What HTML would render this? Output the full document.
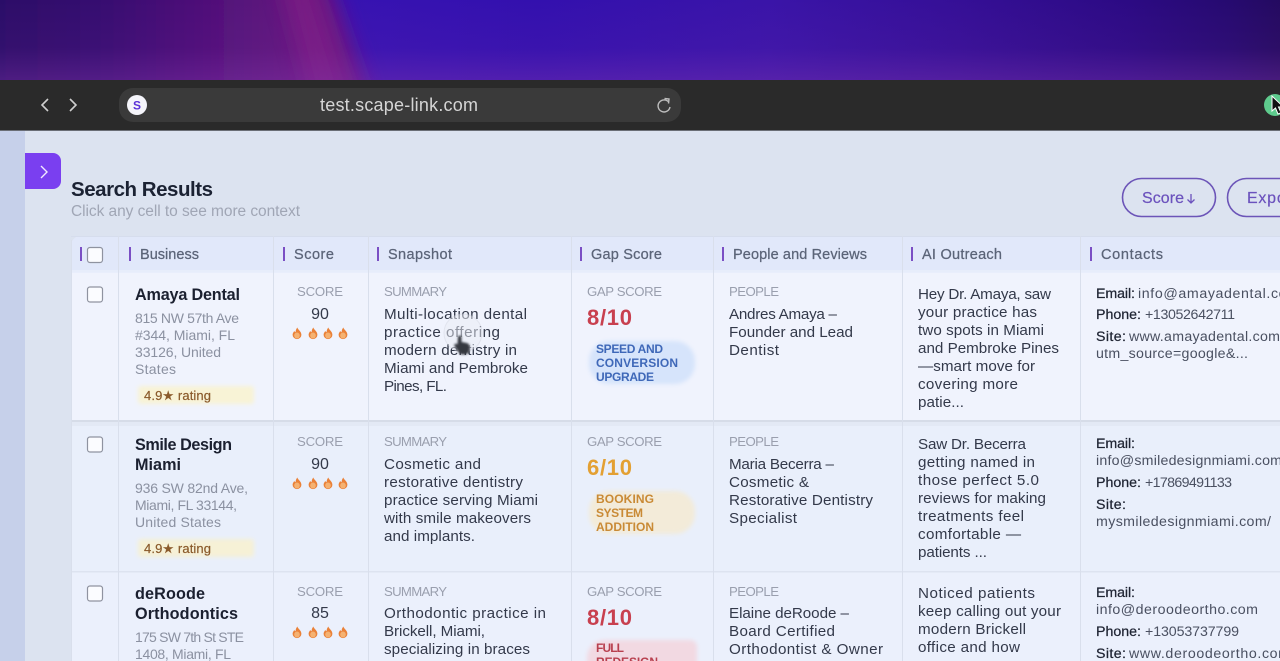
<!DOCTYPE html>
<html lang="en"><head><meta charset="utf-8"><title>Search Results</title>
<style>
html,body{margin:0;padding:0;width:1280px;height:661px;overflow:hidden;background:#dce3f0}
svg{display:block;filter:blur(.35px)}
text{font-family:"Liberation Sans",sans-serif}
.t{font-size:15.2px;fill:#33394a}
.h{font-size:14.5px;fill:#5b6478;stroke:#5b6478;stroke-width:.25px}
.l{font-size:13.2px;fill:#9a9fae}
.n{font-size:16.2px;fill:#1b2030;font-weight:700}
.a{font-size:14px;fill:#8b91a1}
.r{font-size:13px;fill:#8a5a2b;stroke:#8a5a2b;stroke-width:.2px}
.s{font-size:16px;fill:#33394a}
.g{font-size:22px;font-weight:700}
.p{font-size:12px;font-weight:700}
.c{font-size:14.2px;fill:#4a5061}
.b{font-size:14.2px;fill:#1f2433;stroke:#1f2433;stroke-width:.25px}
.bar{fill:#7a4fc4}
.cb{fill:#fbfcff;stroke:#8f93a0;stroke-width:1.2}
</style></head><body>
<svg xmlns="http://www.w3.org/2000/svg" width="1280" height="661" viewBox="0 0 1280 661">
<defs>
<linearGradient id="top" x1="0" x2="1" y1="0" y2="0">
<stop offset="0" stop-color="#3f18b8"/><stop offset=".42" stop-color="#3310ae"/><stop offset=".6" stop-color="#3a14a8"/><stop offset=".75" stop-color="#350f96"/><stop offset=".88" stop-color="#2c0a84"/><stop offset=".96" stop-color="#260a70"/><stop offset="1" stop-color="#240a60"/>
</linearGradient>
<linearGradient id="left" gradientUnits="userSpaceOnUse" x1="0" x2="320" y1="0" y2="0">
<stop offset="0" stop-color="#2c0a68"/><stop offset=".3" stop-color="#350d70"/><stop offset=".6" stop-color="#4c1078"/><stop offset="1" stop-color="#681680"/>
</linearGradient>
<linearGradient id="topb" x1="0" x2="0" y1="0" y2="1">
<stop offset="0" stop-color="#8a3ab0" stop-opacity="0"/><stop offset=".6" stop-color="#8a3ab0" stop-opacity=".08"/><stop offset="1" stop-color="#8a3ab0" stop-opacity=".34"/>
</linearGradient>
<symbol id="f" viewBox="-5 -6.5 10 12" overflow="visible">
<path d="M.3-6C1-3.6 4.4-2 4.4 1.2A4.4 4.4 0 0 1-4.4 1.2C-4.4-.4-3.4-1.4-2.8-2.4-2.2-1.8-1.8-1.4-1.4-1.2-1.5-3 -.6-4.8.3-6Z" fill="#ea8138"/>
<ellipse cx="0" cy="2" rx="2.800" ry="3" fill="#f5b272"/>
</symbol>
<filter id="soft" x="-20%" y="-30%" width="140%" height="160%"><feGaussianBlur stdDeviation="2"/></filter>
<filter id="hand" x="-30%" y="-30%" width="160%" height="160%"><feGaussianBlur stdDeviation="1"/></filter>
<filter id="b10" filterUnits="userSpaceOnUse" x="-150" y="-150" width="800" height="400"><feGaussianBlur stdDeviation="10"/></filter>
<filter id="b8" filterUnits="userSpaceOnUse" x="-150" y="-150" width="800" height="400"><feGaussianBlur stdDeviation="10"/></filter>
<clipPath id="clipTop"><rect width="1280" height="80"/></clipPath>
</defs>

<g clip-path="url(#clipTop)">
<rect width="1280" height="80" fill="url(#top)"/>
<path d="M-60-40H322L378 120H-60Z" fill="url(#left)" filter="url(#b10)"/>
<path d="M274-40H306L356 120H316Z" fill="#7c1c84" opacity=".85" filter="url(#b8)"/>
<rect width="1280" height="80" fill="url(#topb)"/>
</g>

<rect y="80" width="1280" height="50" fill="#2a2a2a"/>
<rect y="130" width="1280" height="1" fill="#6a6e76"/>
<rect x="119" y="88" width="562" height="34" rx="14" fill="#3a3a3a"/>
<path d="M48 99l-6 6 6 6M70 99l6 6-6 6" fill="none" stroke="#cfcfcf" stroke-width="1.6"/>
<circle cx="137" cy="105" r="10" fill="#f4f4fa"/>
<text x="137" y="109.500" text-anchor="middle" style="font-size:12px;font-weight:700;fill:#5a30d8">S</text>
<text x="320" y="111" textLength="158" style="font-size:18px;fill:#d5d5d5">test.scape-link.com</text>
<path d="M669 102.500A6 6 0 1 0 670 107M664.500 98.500l4.500 .5-.5 4.500" fill="none" stroke="#bdbdbd" stroke-width="1.4"/>
<circle cx="1275" cy="105" r="11" fill="#5ecb8d"/>
<path d="M1272 96v15l3.500-3 2.500 6 3-1.300-2.500-5.700h5Z" fill="#111" stroke="#fff" stroke-width="1"/>

<rect y="131" width="1280" height="530" fill="#dce3f0"/>
<rect y="131" width="25" height="530" fill="#c6d0ea"/>
<path d="M25 153H53a8 8 0 0 1 8 8V181a8 8 0 0 1-8 8H25Z" fill="#7a3ff0"/>
<path d="M41 166l6 6-6 6" fill="none" stroke="#f2e9ff" stroke-width="1.400"/>

<text x="71" y="196" textLength="142" style="font-size:20.5px;font-weight:700;fill:#1b2233">Search Results</text>
<text x="71" y="216" textLength="229" style="font-size:15.500px;fill:#a0a6b5">Click any cell to see more context</text>

<rect x="1122.500" y="178.500" width="93" height="38" rx="19" fill="none" stroke="#6c55b8" stroke-width="1.6"/>
<text x="1142" y="203" textLength="42" style="font-size:16px;fill:#6b52bd;stroke:#6b52bd;stroke-width:.2px">Score</text>
<path d="M1191 194v9M1187.500 199.500l3.500 3.500 3.500-3.500" fill="none" stroke="#6b52bd" stroke-width="1.3"/>
<rect x="1227.500" y="178.500" width="120" height="38" rx="19" fill="none" stroke="#6c55b8" stroke-width="1.6"/>
<text x="1247" y="203" textLength="50" style="font-size:16px;fill:#6b52bd;stroke:#6b52bd;stroke-width:.2px">Export</text>

<!-- table -->
<path d="M71 661V246a10 10 0 0 1 10-10H1280V661Z" fill="#eaf0fc"/>
<path d="M71 272V246a10 10 0 0 1 10-10H1280V272Z" fill="#e1e8fa"/>
<rect x="71" y="270" width="1209" height="3" fill="#e9eefb" opacity=".8"/>
<rect x="71" y="273" width="1209" height="148" fill="#f0f3fd"/>
<rect x="71" y="421" width="1209" height="150" fill="#e9effb"/>
<rect x="71" y="571" width="1209" height="90" fill="#ebf0fc"/>
<rect x="71" y="236" width="1209" height="1" fill="#d6dded"/>
<rect x="71" y="420" width="1209" height="2" fill="#d6dce8"/>
<rect x="71" y="422" width="1209" height="4" fill="#e0e5f1" opacity=".6"/>
<rect x="71" y="571" width="1209" height="1.500" fill="#dde3f0"/>
<g fill="#d9dfec">
<rect x="71" y="240" width="1" height="421"/>
<rect x="118" y="236" width="1" height="425"/>
<rect x="273" y="236" width="1" height="425"/>
<rect x="368" y="236" width="1" height="425"/>
<rect x="571" y="236" width="1" height="425"/>
<rect x="713" y="236" width="1" height="425"/>
<rect x="902" y="236" width="1" height="425"/>
<rect x="1080" y="236" width="1" height="425"/>
</g>

<!-- header -->
<g class="bar">
<rect x="80" y="247" width="2" height="14"/><rect x="129" y="247" width="2" height="14"/><rect x="283" y="247" width="2" height="14"/><rect x="377" y="247" width="2" height="14"/><rect x="580" y="247" width="2" height="14"/><rect x="722" y="247" width="2" height="14"/><rect x="911" y="247" width="2" height="14"/><rect x="1090" y="247" width="2" height="14"/>
</g>
<rect x="87.500" y="247.500" width="15" height="15" rx="2.500" class="cb"/>
<text class="h" x="140" y="259" textLength="59">Business</text>
<text class="h" x="294" y="259" textLength="40">Score</text>
<text class="h" x="388" y="259" textLength="64">Snapshot</text>
<text class="h" x="591" y="259" textLength="71">Gap Score</text>
<text class="h" x="733" y="259" textLength="134">People and Reviews</text>
<text class="h" x="922" y="259" textLength="80">AI Outreach</text>
<text class="h" x="1101" y="259" textLength="62">Contacts</text>

<!-- row 1 -->
<rect x="87.500" y="287" width="15" height="15" rx="2.500" class="cb"/>
<text class="n" x="135" y="300" textLength="105">Amaya Dental</text>
<text class="a" x="135" y="323" textLength="104">815 NW 57th Ave</text>
<text class="a" x="135" y="340" textLength="100">#344, Miami, FL</text>
<text class="a" x="135" y="357" textLength="86">33126, United</text>
<text class="a" x="135" y="374" textLength="41">States</text>
<rect x="138" y="386" width="116" height="18" rx="3" fill="#f8f3d6" filter="url(#soft)"/>
<text class="r" x="144" y="400" textLength="67">4.9★ rating</text>
<text class="l" x="297" y="296" textLength="46">SCORE</text>
<text class="s" x="320" y="319" text-anchor="middle">90</text>
<use href="#f" x="292" y="327" width="10" height="12"/><use href="#f" x="308" y="327" width="10" height="12"/><use href="#f" x="323" y="327" width="10" height="12"/><use href="#f" x="338" y="327" width="10" height="12"/>
<text class="l" x="384" y="296" textLength="63">SUMMARY</text>
<text class="t" x="384" y="319" textLength="143">Multi-location dental</text>
<text class="t" x="384" y="337" textLength="116">practice offering</text>
<text class="t" x="384" y="355" textLength="133">modern dentistry in</text>
<text class="t" x="384" y="373" textLength="144">Miami and Pembroke</text>
<text class="t" x="384" y="391" textLength="63">Pines, FL.</text>
<text class="l" x="587" y="296" textLength="75">GAP SCORE</text>
<text class="g" x="587" y="325" textLength="45" style="fill:#c8404f">8/10</text>
<rect x="589" y="341" width="106" height="43" rx="20" fill="#d6e4fb" filter="url(#soft)"/>
<text class="p" x="596" y="353" textLength="67" style="fill:#3f68b8">SPEED AND</text>
<text class="p" x="596" y="367" textLength="82" style="fill:#3f68b8">CONVERSION</text>
<text class="p" x="596" y="381" textLength="58" style="fill:#3f68b8">UPGRADE</text>
<text class="l" x="729" y="296" textLength="50">PEOPLE</text>
<text class="t" x="729" y="319" textLength="108">Andres Amaya –</text>
<text class="t" x="729" y="337" textLength="124">Founder and Lead</text>
<text class="t" x="729" y="355" textLength="50">Dentist</text>
<text class="t" x="918" y="299" textLength="133">Hey Dr. Amaya, saw</text>
<text class="t" x="918" y="317" textLength="119">your practice has</text>
<text class="t" x="918" y="335" textLength="126">two spots in Miami</text>
<text class="t" x="918" y="353" textLength="141">and Pembroke Pines</text>
<text class="t" x="918" y="371" textLength="117">—smart move for</text>
<text class="t" x="918" y="389" textLength="100">covering more</text>
<text class="t" x="918" y="407" textLength="46">patie...</text>
<text class="b" x="1096" y="298" textLength="39">Email:</text>
<text class="c" x="1138" y="298" textLength="161">info@amayadental.com</text>
<text class="b" x="1096" y="319" textLength="45">Phone:</text>
<text class="c" x="1145" y="319" textLength="90">+13052642711</text>
<text class="b" x="1096" y="341" textLength="30">Site:</text>
<text class="c" x="1129" y="341" textLength="151">www.amayadental.com</text>
<text class="c" x="1096" y="358" textLength="152">utm_source=google&amp;...</text>

<!-- row 2 -->
<rect x="87.500" y="437" width="15" height="15" rx="2.500" class="cb"/>
<text class="n" x="135" y="450" textLength="97">Smile Design</text>
<text class="n" x="135" y="470" textLength="46">Miami</text>
<text class="a" x="135" y="493" textLength="113">936 SW 82nd Ave,</text>
<text class="a" x="135" y="510" textLength="102">Miami, FL 33144,</text>
<text class="a" x="135" y="527" textLength="86">United States</text>
<rect x="138" y="539" width="116" height="18" rx="3" fill="#f6f1d6" filter="url(#soft)"/>
<text class="r" x="144" y="553" textLength="67">4.9★ rating</text>
<text class="l" x="297" y="446" textLength="46">SCORE</text>
<text class="s" x="320" y="469" text-anchor="middle">90</text>
<use href="#f" x="292" y="477" width="10" height="12"/><use href="#f" x="308" y="477" width="10" height="12"/><use href="#f" x="323" y="477" width="10" height="12"/><use href="#f" x="338" y="477" width="10" height="12"/>
<text class="l" x="384" y="446" textLength="63">SUMMARY</text>
<text class="t" x="384" y="469" textLength="97">Cosmetic and</text>
<text class="t" x="384" y="487" textLength="139">restorative dentistry</text>
<text class="t" x="384" y="505" textLength="154">practice serving Miami</text>
<text class="t" x="384" y="523" textLength="147">with smile makeovers</text>
<text class="t" x="384" y="541" textLength="91">and implants.</text>
<text class="l" x="587" y="446" textLength="75">GAP SCORE</text>
<text class="g" x="587" y="475" textLength="45" style="fill:#e3a033">6/10</text>
<rect x="589" y="491" width="106" height="43" rx="20" fill="#f3ebd9" filter="url(#soft)"/>
<text class="p" x="596" y="503" textLength="58" style="fill:#c98a35">BOOKING</text>
<text class="p" x="596" y="517" textLength="47" style="fill:#c98a35">SYSTEM</text>
<text class="p" x="596" y="531" textLength="58" style="fill:#c98a35">ADDITION</text>
<text class="l" x="729" y="446" textLength="50">PEOPLE</text>
<text class="t" x="729" y="469" textLength="105">Maria Becerra –</text>
<text class="t" x="729" y="487" textLength="80">Cosmetic &amp;</text>
<text class="t" x="729" y="505" textLength="144">Restorative Dentistry</text>
<text class="t" x="729" y="523" textLength="68">Specialist</text>
<text class="t" x="918" y="449" textLength="108">Saw Dr. Becerra</text>
<text class="t" x="918" y="467" textLength="117">getting named in</text>
<text class="t" x="918" y="485" textLength="121">those perfect 5.0</text>
<text class="t" x="918" y="503" textLength="128">reviews for making</text>
<text class="t" x="918" y="521" textLength="106">treatments feel</text>
<text class="t" x="918" y="539" textLength="103">comfortable —</text>
<text class="t" x="918" y="557" textLength="69">patients ...</text>
<text class="b" x="1096" y="448" textLength="39">Email:</text>
<text class="c" x="1096" y="465" textLength="186">info@smiledesignmiami.com</text>
<text class="b" x="1096" y="487" textLength="45">Phone:</text>
<text class="c" x="1145" y="487" textLength="87">+17869491133</text>
<text class="b" x="1096" y="509" textLength="30">Site:</text>
<text class="c" x="1096" y="526" textLength="175">mysmiledesignmiami.com/</text>

<!-- row 3 -->
<rect x="87.500" y="586" width="15" height="15" rx="2.500" class="cb"/>
<text class="n" x="135" y="599" textLength="70">deRoode</text>
<text class="n" x="135" y="619" textLength="103">Orthodontics</text>
<text class="a" x="135" y="642" textLength="109">175 SW 7th St STE</text>
<text class="a" x="135" y="659" textLength="96">1408, Miami, FL</text>
<text class="l" x="297" y="596" textLength="46">SCORE</text>
<text class="s" x="320" y="618" text-anchor="middle">85</text>
<use href="#f" x="292" y="626" width="10" height="12"/><use href="#f" x="308" y="626" width="10" height="12"/><use href="#f" x="323" y="626" width="10" height="12"/><use href="#f" x="338" y="626" width="10" height="12"/>
<text class="l" x="384" y="596" textLength="63">SUMMARY</text>
<text class="t" x="384" y="618" textLength="162">Orthodontic practice in</text>
<text class="t" x="384" y="636" textLength="101">Brickell, Miami,</text>
<text class="t" x="384" y="654" textLength="146">specializing in braces</text>
<text class="l" x="587" y="596" textLength="75">GAP SCORE</text>
<text class="g" x="587" y="625" textLength="45" style="fill:#c8404f">8/10</text>
<path d="M605 640H690a7 7 0 0 1 7 7V670H587V658a18 18 0 0 1 18-18Z" fill="#f2d9e2" filter="url(#soft)"/>
<text class="p" x="596" y="652" textLength="28" style="fill:#b8404f">FULL</text>
<text class="p" x="596" y="666" textLength="62" style="fill:#b8404f">REDESIGN</text>
<text class="l" x="729" y="596" textLength="50">PEOPLE</text>
<text class="t" x="729" y="618" textLength="120">Elaine deRoode –</text>
<text class="t" x="729" y="636" textLength="106">Board Certified</text>
<text class="t" x="729" y="654" textLength="154">Orthodontist &amp; Owner</text>
<text class="t" x="918" y="598" textLength="117">Noticed patients</text>
<text class="t" x="918" y="616" textLength="143">keep calling out your</text>
<text class="t" x="918" y="634" textLength="108">modern Brickell</text>
<text class="t" x="918" y="652" textLength="102">office and how</text>
<text class="b" x="1096" y="597" textLength="39">Email:</text>
<text class="c" x="1096" y="614" textLength="162">info@deroodeortho.com</text>
<text class="b" x="1096" y="636" textLength="45">Phone:</text>
<text class="c" x="1145" y="636" textLength="94">+13053737799</text>
<text class="b" x="1096" y="658" textLength="30">Site:</text>
<text class="c" x="1129" y="658" textLength="161">www.deroodeortho.com</text>

<!-- pointer -->
<circle cx="463" cy="333" r="19" fill="#eceef6" opacity=".5" stroke="#d3d6e0" stroke-width="1"/>
<path d="M458 337c0-2 3.500-2 3.500 0v5l5 1c2 .5 3 1.500 3 3.500v3c0 3-2 5-5 5h-2c-2 0-3-1-4-2.500l-4-6c-1-2 1.500-3 3-1.500Z" fill="#35373f" filter="url(#hand)"/>
</svg>
</body></html>
